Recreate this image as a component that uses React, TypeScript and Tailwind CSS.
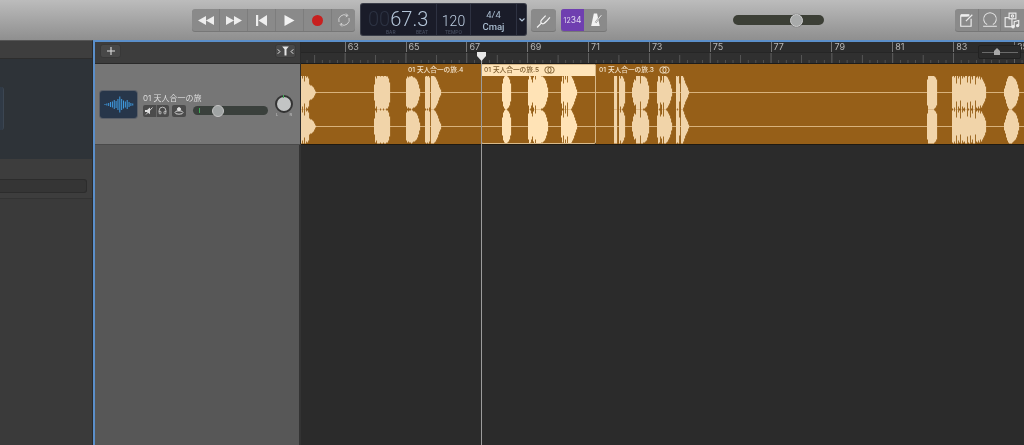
import React from "react";
import { Headphones } from "lucide-react";

type Burst = [number, number[]];
const BURSTS: Burst[] = [
  [301, [17, 14, 17, 11, 17, 15, 16, 14, 8, 7, 7, 6, 5, 3, 1]],
  [374, [8, 16, 14, 17, 17, 17, 16, 17, 17, 16, 17, 17, 16, 16, 14, 10]],
  [406, [14, 16, 15, 16, 16, 17, 16, 15, 15, 14, 13, 11, 8, 4]],
  [425, [16, 17, 16, 17, 15]],
  [431, [17, 17, 17, 16, 15, 13, 11, 8, 5, 3]],
  [502, [9, 14, 16, 17, 17, 16, 15, 13, 9]],
  [528, [13, 17, 16, 13, 10, 15, 17, 13, 17, 17, 17, 17, 17, 16, 16, 15, 14, 12, 9, 5]],
  [561, [11, 16, 9, 17, 13, 17, 10, 17, 17, 17, 16, 14, 12, 9, 6, 3]],
  [614, [17, 17, 17]],
  [619, [17, 14, 17, 16, 14, 11]],
  [632, [5, 10, 13, 12, 17, 17, 17, 17, 9, 17, 17, 16, 16, 15, 14, 11, 7]],
  [657, [11, 17, 16, 10, 12, 17, 10, 17, 17, 16, 15, 13, 11, 8, 4]],
  [676, [17, 16, 17, 9]],
  [681, [17, 17, 15, 12, 9, 7, 5, 2]],
  [927, [13, 17, 17, 17, 17, 17, 17, 16, 15, 13]],
  [952, [16, 17, 15, 17, 9, 17, 14, 16, 8, 17, 14, 16, 15, 17, 17, 10, 16, 17, 9, 16, 13, 17, 17, 8, 15, 16, 14, 16, 13, 15, 13, 11, 9, 6]],
  [1004, [4, 7, 11, 14, 16, 17, 17, 17, 16, 15, 14, 13, 11, 8, 4]],
];

function Wave({ x0, w, color }: { x0: number; w: number; color: string }) {
  const rects: React.ReactNode[] = [];
  BURSTS.forEach(([s, amps]) =>
    amps.forEach((a, i) => {
      const x = s + i;
      if (x < x0 || x >= x0 + w) return;
      rects.push(<rect key={`a${x}`} x={x} y={92.5 - a} width={1.1} height={a * 2} fill={color} />);
      rects.push(<rect key={`b${x}`} x={x} y={126.5 - a} width={1.1} height={a * 2} fill={color} />);
    })
  );
  return (
    <svg width={w} height={68} viewBox={`${x0} 76 ${w} 68`} className="block">
      <rect x={x0} y={92} width={w} height={1} fill="#d8b27c" />
      <rect x={x0} y={126} width={w} height={1} fill="#d8b27c" />
      {rects}
    </svg>
  );
}

function LoopMark({ color }: { color: string }) {
  return (
    <svg width="11" height="8" viewBox="0 0 11 8" fill="none" stroke={color} strokeWidth="0.9">
      <circle cx="4" cy="4" r="3.2" />
      <circle cx="7" cy="4" r="3.2" />
    </svg>
  );
}

const TXT = "font-['Inter','Noto_Sans_CJK_JP',sans-serif]";

function Region({ x0, w, name, selected, labelPad, loop }: { x0: number; w: number; name: string; selected?: boolean; labelPad: number; loop?: boolean }) {
  return (
    <div className={selected ? "relative bg-[#965f18] rounded-[2px] outline outline-1 -outline-offset-1 outline-[#d8b98a] shrink-0" : "bg-[#965f18] shrink-0"} style={{ width: w }}>
      <div
        className={selected ? "h-[12px] flex items-center gap-[5px] bg-[#ffe4b8] text-[#7d5c2e] rounded-t-[2px]" : "h-[12px] flex items-center gap-[5px] text-[#f3e3cb]"}
        style={{ paddingLeft: labelPad }}
      >
        <span className={`${TXT} text-[6.7px] font-medium leading-none whitespace-nowrap`}>{name}</span>
        {loop && <LoopMark color={selected ? "#7d5c2e" : "#f3e3cb"} />}
      </div>
      <Wave x0={x0} w={w} color={selected ? "#ffe3b6" : "#f1d4a9"} />
    </div>
  );
}

function TBtn({ children, last, className }: { children: React.ReactNode; last?: boolean; className?: string }) {
  return (
    <div className={`h-full flex items-center justify-center ${last ? "" : "border-r border-[#7d7d7d]"} ${className ?? ""}`}>{children}</div>
  );
}

function Ruler() {
  const nums = [63, 65, 67, 69, 71, 73, 75, 77, 79, 81, 83, 85];
  const ticks: React.ReactNode[] = [];
  const unit = 60.85 / 8;
  for (let i = -5; i < 92; i++) {
    const x = 43.7 + i * unit;
    if (x < 0 || x > 724) continue;
    const major = i % 8 === 0;
    const bar = i % 4 === 0;
    ticks.push(
      <rect key={i} x={x} y={major ? 0 : bar ? 2 : 7} width={0.8} height={major ? 11 : bar ? 9 : 4} fill={major ? "#6e6e6e" : bar ? "#5e5e5e" : "#585858"} />
    );
  }
  return (
    <div className="relative flex-1 h-full bg-[#2c2c2c] flex flex-col overflow-hidden">
      <div className="h-[10px] flex pl-[43.7px] shrink-0">
        {nums.map((n) => (
          <div key={n} className={`${TXT} w-[60.85px] shrink-0 border-l border-[#777] pl-[2px] text-[9px] leading-[10px] text-[#b8b8b8]`}>{n}</div>
        ))}
      </div>
      <div className="h-[12px] bg-[#303030] border-t border-[#262626] border-b border-b-[#1c1c1c] shrink-0">
        <svg width="724" height="10" className="block">{ticks}</svg>
      </div>
      <div className="absolute left-[677px] top-[3px] w-[43px] h-[14px] rounded-[2px] bg-[#2b2b2b] border border-[#222] flex items-center justify-center">
        <div className="relative w-[36px] h-px bg-[#6a6a6a]">
          <svg width="6" height="7" viewBox="0 0 6 7" className="absolute left-[12px] -top-[4px]"><path d="M3 0 L6 3 V7 H0 V3 Z" fill="#a8a8a8" /></svg>
        </div>
      </div>
    </div>
  );
}

export default function App() {
  return (
    <div className="w-[1024px] h-[445px] overflow-hidden flex flex-col bg-[#2b2b2b] blur-[0.35px]">
      {/* toolbar */}
      <div className="h-[40px] shrink-0 flex items-center bg-gradient-to-b from-[#bcbcbc] to-[#8f8f8f] pl-[192px]">
        <div className="w-[163px] h-[22px] flex rounded-[3px] bg-[#8a8a8a] shadow-[0_1px_0_#777]">
          <TBtn className="w-[28px]">
            <svg width="16" height="9" viewBox="0 0 16 9" fill="#eee"><path d="M8 0v9L0 4.5zM16 0v9L8 4.5z" /></svg>
          </TBtn>
          <TBtn className="w-[28px]">
            <svg width="16" height="9" viewBox="0 0 16 9" fill="#eee"><path d="M0 0v9l8-4.5zM8 0v9l8-4.5z" /></svg>
          </TBtn>
          <TBtn className="w-[28px]">
            <svg width="11" height="11" viewBox="0 0 11 11" fill="#eee"><path d="M0 0h2.2v11H0zM11 0v11L2.5 5.5z" /></svg>
          </TBtn>
          <TBtn className="w-[28px]">
            <svg width="11" height="11" viewBox="0 0 11 11" fill="#f2f2f2"><path d="M0.5 0v11l10-5.5z" /></svg>
          </TBtn>
          <TBtn className="w-[28px]">
            <div className="w-[11px] h-[11px] rounded-full bg-[#c8201f]" />
          </TBtn>
          <TBtn last className="w-[23px]">
            <svg width="14" height="14" viewBox="0 0 14 14" fill="none" stroke="#cfcfcf" strokeWidth="1">
              <path d="M2 9A5.5 5.5 0 0 1 10 2.5M12 5a5.5 5.5 0 0 1-8 6.5" />
              <path d="M9 0.5l2 2-2.2 1.4M5 13.5l-2-2 2.2-1.4" />
            </svg>
          </TBtn>
        </div>
        {/* LCD */}
        <div className="ml-[6px] w-[165px] h-[31px] -mt-[1px] flex rounded-[2px] bg-[#1a1c29] shadow-[0_0_0_1px_#3a3d48] text-[#b3c5d8]">
          <div className="relative w-[76px] border-r border-[#2e3242] font-['Roboto',sans-serif]">
            <div className="absolute left-[7px] top-[5px] text-[20px] leading-[20px] font-light whitespace-nowrap">
              <span className="text-[#2c3242]">00</span>
              <span>67.3</span>
            </div>
            <span className="absolute left-[25px] bottom-[0px] text-[5px] leading-[5px] text-[#4d5466]">BAR</span>
            <span className="absolute left-[55px] bottom-[0px] text-[5px] leading-[5px] text-[#4d5466]">BEAT</span>
          </div>
          <div className="w-[34px] border-r border-[#2e3242] flex flex-col items-center font-['Roboto',sans-serif]">
            <span className="mt-[10px] text-[14px] leading-[15px] font-light text-[#bccde0]">120</span>
            <span className="mt-[1px] text-[5px] leading-[5px] text-[#4d5466]">TEMPO</span>
          </div>
          <div className="w-[46px] border-r border-[#2e3242] flex flex-col items-center pt-[5px] font-['Roboto',sans-serif]">
            <span className="text-[9.5px] leading-[12px] text-[#a9bccf]">4/4</span>
            <span className="text-[9.5px] leading-[12px] font-medium text-[#a9bccf]">Cmaj</span>
          </div>
          <div className="flex-1 flex items-center justify-center">
            <svg width="6" height="4" viewBox="0 0 6 4" fill="none" stroke="#b3c5d8" strokeWidth="1.2"><path d="M0.5 0.5L3 3l2.5-2.5" /></svg>
          </div>
        </div>
        {/* tuner */}
        <div className="ml-[5px] w-[25px] h-[22px] rounded-[3px] bg-[#8a8a8a] shadow-[0_1px_0_#777] flex items-center justify-center">
          <svg width="15" height="15" viewBox="0 0 14 14" fill="none" stroke="#f4f4f4" strokeWidth="1.1">
            <path d="M1 13.5L5 9.5M5 9.5C3.5 8 5 6.5 7 4.5L9 2.5M5 9.5C6.5 11 8 9.5 10 7.5L13 4" />
          </svg>
        </div>
        {/* count-in / metronome */}
        <div className="ml-[5px] w-[46px] h-[22px] flex rounded-[3px] bg-[#8a8a8a] shadow-[0_1px_0_#777] overflow-hidden">
          <div className={`${TXT} w-[23px] bg-[#6f3fb0] text-[#e0d6f0] text-[8.5px] flex items-center justify-center`}>
            <span><span className="text-[7px]">12</span>34</span>
          </div>
          <div className="flex-1 flex items-center justify-center">
            <svg width="14" height="14" viewBox="0 0 13 13" fill="#f2f2f2"><path d="M4.5 0.5h3L10 12H2z" /><path d="M6 9L11.5 2" stroke="#8a8a8a" strokeWidth="1.6" /><path d="M6 9L11.5 2" stroke="#f2f2f2" strokeWidth="0.8" /></svg>
          </div>
        </div>
        {/* master */}
        <div className="ml-[126px] relative w-[91px] h-[10px] rounded-full bg-[#3c3f36]">
          <div className="absolute left-[57px] -top-[1.5px] w-[13px] h-[13px] rounded-full bg-[#a9abab] border border-[#d0d0d0] shadow-[0_0_1px_#333]" />
        </div>
        {/* right buttons */}
        <div className="ml-[131px] w-[69px] h-[22px] flex rounded-l-[3px] bg-[#8a8a8a] shadow-[0_1px_0_#777]">
          <TBtn className="w-[24px]">
            <svg width="15" height="15" viewBox="0 0 13 13" fill="none" stroke="#eee" strokeWidth="1"><path d="M10.5 5v6.5h-9v-9h6" /><path d="M1.5 2h7.5" strokeWidth="2" /><path d="M6 7l5.5-5.5" /></svg>
          </TBtn>
          <TBtn className="w-[22px]">
            <svg width="16" height="16" viewBox="0 0 14 14" fill="none" stroke="#e6e6e6" strokeWidth="0.9"><path d="M4.5 11A5.5 5.5 0 1 1 9.5 11" /><path d="M1 12.5h12" /></svg>
          </TBtn>
          <TBtn last className="w-[23px]">
            <svg width="17" height="17" viewBox="0 0 15 15" fill="none" stroke="#eee" strokeWidth="1"><rect x="1" y="5" width="6" height="8" /><rect x="4.5" y="1" width="6" height="5" fill="#8a8a8a" /><circle cx="7.5" cy="3.5" r="1" /><path d="M9 13V8.5l4-1V12" /><circle cx="8" cy="13" r="1" fill="#eee" /><circle cx="12" cy="12" r="1" fill="#eee" /></svg>
          </TBtn>
        </div>
      </div>

      {/* main */}
      <div className="flex-1 flex min-h-0">
        {/* left panel */}
        <div className="w-[93px] shrink-0 flex flex-col bg-[#3a3a3a] border-t border-[#555] border-r border-r-[#2a2a2a]">
          <div className="h-[18px] bg-[#3e3e3e] border-b border-[#2d2d2d] shrink-0" />
          <div className="h-[100px] bg-[#2e3338] shrink-0 flex items-center">
            <div className="w-[4px] h-[43px] bg-[#303a46] rounded-r-[3px] border-r border-[#3c4652] -mt-[1px]" />
          </div>
          <div className="h-[40px] bg-[#3d3d3d] border-b border-[#333] shrink-0 pt-[20px]">
            <div className="w-[87px] h-[14px] bg-[#353535] rounded-r-[3px] border border-l-0 border-[#2c2c2c]" />
          </div>
          <div className="flex-1" />
        </div>

        {/* right area */}
        <div className="relative flex-1 min-w-0 flex flex-col border-l-2 border-t-2 border-[#5b8fca]">
          {/* header row */}
          <div className="h-[22px] flex shrink-0">
            <div className="w-[206px] shrink-0 h-full bg-[#3d3d3d] border-r border-[#2a2a2a] border-b border-b-[#2a2a2a] flex items-center justify-between pl-[5px] pr-[4px] pb-[3px]">
              <div className="w-[21px] h-[14px] rounded-[3px] bg-[#484848] border border-[#383838] flex items-center justify-center">
                <svg width="8" height="8" viewBox="0 0 8 8" stroke="#ddd" strokeWidth="1.1"><path d="M4 0v8M0 4h8" /></svg>
              </div>
              <div className="w-[21px] h-[14px] rounded-[3px] bg-[#484848] border border-[#383838] flex items-center justify-center">
                <svg width="17" height="10" viewBox="0 0 15 9" fill="none" stroke="#e4e4e4" strokeWidth="0.9"><path d="M0.5 3L2.5 5L0.5 7M14.5 3L12.5 5L14.5 7" /><path d="M4.5 0.5h6L8.4 3v5.5H6.6V3z" fill="#e4e4e4" stroke="none" /></svg>
              </div>
            </div>
            <Ruler />
          </div>
          {/* track row */}
          <div className="h-[81px] flex shrink-0">
            <div className="w-[206px] shrink-0 h-full bg-[#767676] border-r border-[#2a2a2a] border-b border-b-[#4a4a4a] flex items-center pl-[5px]">
              <div className="w-[37px] h-[27px] rounded-[3px] bg-[#27364a] shadow-[0_0_0_1px_#5a5f68] flex items-center justify-center">
                <svg width="30" height="17" viewBox="0 0 30 17" stroke="#3f9be0" strokeWidth="1">
                  {[1, 2, 3, 5, 6, 9, 7, 11, 16, 11, 8, 6, 9, 5, 3, 2].map((h, i) => (
                    <line key={i} x1={1 + i * 1.85} x2={1 + i * 1.85} y1={8.5 - h / 2} y2={8.5 + h / 2} />
                  ))}
                </svg>
              </div>
              <div className="ml-[6px] w-[52px] mt-[1px] shrink-0">
                <div className={`${TXT} text-[8px] leading-[11px] text-[#dedede] whitespace-nowrap`}>01 天人合一の旅</div>
                <div className="mt-[1px] flex gap-[3px]">
                  <div className="w-[26px] h-[12px] flex rounded-[2px] bg-[#4b4b4b]">
                    <div className="flex-1 flex items-center justify-center border-r border-[#666]">
                      <svg width="8" height="8" viewBox="0 0 8 8" fill="#ddd"><path d="M0 3h2l3-2.5v6.8L2 5H0z" /><path d="M1 7.5L7.5 0.5" stroke="#ddd" strokeWidth="0.9" /></svg>
                    </div>
                    <div className="flex-1 flex items-center justify-center">
                      <Headphones size={9} color="#ddd" strokeWidth={2} />
                    </div>
                  </div>
                  <div className="w-[14px] h-[12px] rounded-[2px] bg-[#4b4b4b] flex items-center justify-center">
                    <svg width="10" height="8" viewBox="0 0 10 8" fill="none" stroke="#ddd" strokeWidth="0.9"><circle cx="5" cy="2.2" r="1.6" fill="#ddd" /><ellipse cx="5" cy="5.5" rx="4" ry="1.7" /></svg>
                  </div>
                </div>
              </div>
              <div className="relative ml-[-2px] w-[75px] h-[9px] mt-[13px] rounded-full bg-[#3a403c]">
                <div className="absolute left-[6px] top-[2px] w-px h-[5px] bg-[#3cae55]" />
                <div className="absolute left-[19px] -top-[1.5px] w-[12px] h-[12px] rounded-full bg-[#a0a4a4] border border-[#c5c5c5]" />
              </div>
              <div className="relative ml-[7px] w-[18px] h-[18px] rounded-full bg-[#c2c4c4] border-[2px] border-[#333]">
                <div className="absolute left-[6px] -top-[2px] w-px h-[3px] bg-[#3cae55]" />
                <span className={`${TXT} absolute -left-[1px] top-[15px] text-[4px] leading-[5px] text-[#ccc]`}>L</span>
                <span className={`${TXT} absolute right-[-1px] top-[15px] text-[4px] leading-[5px] text-[#ccc]`}>R</span>
              </div>
            </div>
            <div className="flex-1 min-w-0 flex overflow-hidden border-b border-[#1f1a12] bg-[#2b2b2b]">
              <Region x0={301} w={180} name="01 天人合一の旅.4" labelPad={107} />
              <Region x0={481} w={115} name="01 天人合一の旅.5" labelPad={3} selected loop />
              <Region x0={596} w={428} name="01 天人合一の旅.3" labelPad={3} loop />
            </div>
          </div>
          {/* empty rows */}
          <div className="flex-1 flex min-h-0">
            <div className="w-[206px] shrink-0 bg-[#575757] border-r-2 border-[#333]" />
            <div className="flex-1 bg-[#2b2b2b]" />
          </div>
          {/* playhead */}
          <div className="absolute left-[386px] top-[10px] bottom-0 w-px bg-[#9c9c9c]" />
          <svg width="9" height="9" viewBox="0 0 9 9" className="absolute left-[382px] top-[10px]"><path d="M0 0h9v4L4.5 9 0 4z" fill="#e8e8e8" /></svg>
        </div>
      </div>
    </div>
  );
}
